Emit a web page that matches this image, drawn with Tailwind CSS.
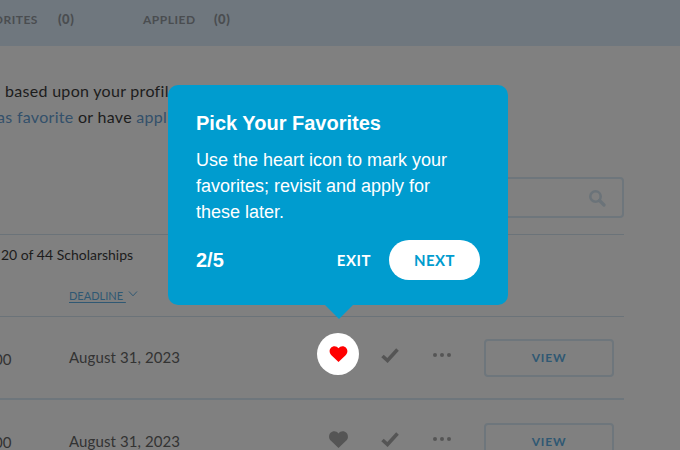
<!DOCTYPE html>
<html lang="en">
<head>
  <meta charset="UTF-8">
  <meta name="viewport" content="width=device-width, initial-scale=1">
  <title>Scholarships</title>
  <script src="https://cdn.jsdelivr.net/npm/@tailwindcss/browser@4"></script>
</head>
<body class="relative w-[680px] h-[450px] overflow-hidden bg-[#808080] font-['Lato',sans-serif]">

  <!-- Tabs -->
  <nav class="h-[46px] bg-[#6f777e] flex items-center pb-[6px] -ml-[30px] text-[12px] font-bold tracking-[0.5px] text-[#4a4d50]">
    <span class="w-[88px]">FAVORITES</span>
    <span class="w-[85px] text-[13px] font-black">(0)</span>
    <span class="w-[71px]">APPLIED</span>
    <span class="text-[13px] font-black">(0)</span>
  </nav>

  <!-- Intro -->
  <section class="pt-[32px] h-[131px] text-[16px] leading-[26px] tracking-[0.3px] text-[#1c1c1c] whitespace-nowrap">
    <p class="pl-[5px]">based upon your profile</p>
    <p class="-ml-[3px]"><span class="text-[#33506b]">as favorite</span> or have <span class="text-[#33506b]">applied</span></p>
  </section>

  <!-- Search -->
  <div class="flex justify-end pr-[56px]">
    <div class="w-[300px] h-[41px] rounded-[4px] border-2 border-[#6e767c] flex items-center justify-end pr-[16px]">
      <svg class="w-[18px] h-[18px] text-[#6b7379]" viewBox="0 0 18 18" fill="none" stroke="currentColor">
        <circle cx="7.5" cy="7.5" r="5.2" stroke-width="2.6"></circle>
        <path d="M11.5 11.5L16 16" stroke-width="3.2" stroke-linecap="round"></path>
      </svg>
    </div>
  </div>

  <!-- Table -->
  <div class="mt-[16px] mr-[56px]">
    <div class="border-t border-[#6b7379] h-[43px] flex items-center pb-[3px] pl-[1px] text-[14px] text-[#1c1c1c] whitespace-nowrap">20 of 44 Scholarships</div>
    <div class="h-[40px] border-b border-[#6b7379] flex items-start pt-[11px] pl-[69px] text-[#2f5873]">
      <span class="text-[11px] underline underline-offset-2">DEADLINE&nbsp;</span>
      <svg class="w-[10px] h-[6px] ml-[2px] mt-[3px]" viewBox="0 0 10 6" fill="none" stroke="currentColor" stroke-width="1">
        <path d="M1 .5L5 4.800L9 .5"></path>
      </svg>
    </div>

    <div class="h-[83px] border-b-2 border-[#6e767c] flex items-center text-[#333333] pl-[69px] relative">
      <span class="absolute -left-[6px] top-[31px] text-[15px] tracking-[0.1px]">00</span>
      <span class="w-[237px] text-[15px] tracking-[0.1px]">August 31, 2023</span>
      <span class="w-[28px] h-[28px]"></span>
      <svg class="-mt-[5px] ml-[47px] w-[18px] h-[15px] text-[#555555]" viewBox="0 0 18 15" fill="none" stroke="currentColor" stroke-width="3.6"><path d="M1.500 8L6.500 12.500L16.500 1.500"></path></svg>
      <span class="-mt-[5px] ml-[34px] flex gap-[3px]"><i class="w-[4px] h-[4px] rounded-full bg-[#555555]"></i><i class="w-[4px] h-[4px] rounded-full bg-[#555555]"></i><i class="w-[4px] h-[4px] rounded-full bg-[#555555]"></i></span>
      <button class="ml-[33px] w-[130px] h-[38px] rounded-[4px] border-2 border-[#6e767c] text-[12px] font-bold tracking-[0.8px] text-[#2f5873]">VIEW</button>
    </div>

    <div class="h-[83px] flex items-center text-[#333333] pl-[69px] relative">
      <span class="absolute -left-[6px] top-[31px] text-[15px] tracking-[0.1px]">00</span>
      <span class="w-[237px] text-[15px] tracking-[0.1px]">August 31, 2023</span>
      <svg class="-mt-[5px] ml-[23px] w-[19px] h-[17px] text-[#555555]" viewBox="0 0 20 18" fill="currentColor"><path d="M10 18L2 10.300C.7 9 0 7.700 0 6 0 2.700 2.500.3 5.500.3c1.800 0 3.400.8 4.500 2.300C11.100 1.100 12.700.3 14.500.3 17.500.3 20 2.700 20 6c0 1.700-.7 3-2 4.300z"></path></svg>
      <svg class="-mt-[5px] ml-[33px] w-[18px] h-[15px] text-[#555555]" viewBox="0 0 18 15" fill="none" stroke="currentColor" stroke-width="3.600"><path d="M1.500 8L6.500 12.500L16.500 1.500"></path></svg>
      <span class="-mt-[5px] ml-[34px] flex gap-[3px]"><i class="w-[4px] h-[4px] rounded-full bg-[#555555]"></i><i class="w-[4px] h-[4px] rounded-full bg-[#555555]"></i><i class="w-[4px] h-[4px] rounded-full bg-[#555555]"></i></span>
      <button class="ml-[33px] w-[130px] h-[38px] rounded-[4px] border-2 border-[#6e767c] text-[12px] font-bold tracking-[0.8px] text-[#2f5873]">VIEW</button>
    </div>
  </div>

  <!-- Highlighted heart -->
  <div class="absolute left-[317px] top-[333px] w-[42px] h-[42px] rounded-full bg-white flex items-center justify-center">
    <svg class="w-[19px] h-[16px]" viewBox="0 0 20 18" fill="#ff0000"><path d="M10 18L2 10.300C.7 9 0 7.700 0 6 0 2.700 2.500.3 5.500.3c1.800 0 3.400.8 4.500 2.300C11.100 1.100 12.700.3 14.500.3 17.500.3 20 2.700 20 6c0 1.700-.7 3-2 4.300z"></path></svg>
  </div>

  <!-- Tour tooltip -->
  <div class="absolute left-[168px] top-[85px] w-[340px] h-[220px] rounded-[10px] bg-[#009ccf] px-[28px] pt-[26px] text-white font-['Liberation_Sans',sans-serif]">
    <h2 class="text-[20px] leading-[24px] font-bold">Pick Your Favorites</h2>
    <p class="mt-[12px] text-[18px] leading-[26px]">Use the heart icon to mark your<br>favorites; revisit and apply for<br>these later.</p>
    <div class="mt-[15px] flex items-center">
      <span class="text-[20px] font-bold">2/5</span>
      <span class="ml-auto text-[15px] font-bold tracking-[0.5px] font-['Lato',sans-serif]">EXIT</span>
      <button class="ml-[18px] w-[91px] h-[40px] rounded-full bg-white text-[#009ccf] text-[15px] font-bold tracking-[0.5px] font-['Lato',sans-serif]">NEXT</button>
    </div>
    <div class="absolute left-[157px] -bottom-[14px] w-0 h-0 border-x-[14px] border-x-transparent border-t-[14px] border-t-[#009ccf]"></div>
  </div>
</body>
</html>
